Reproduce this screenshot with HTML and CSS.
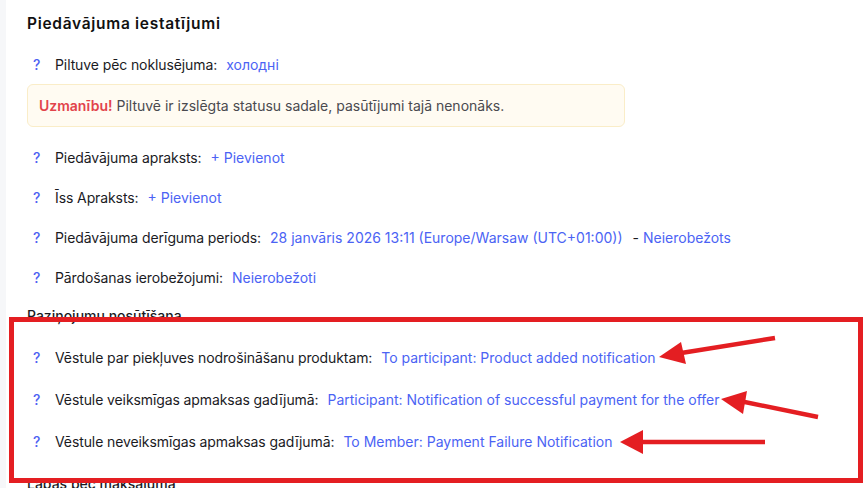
FILE: index.html
```html
<!DOCTYPE html>
<html lang="lv">
<head>
<meta charset="utf-8">
<link rel="stylesheet" href="styles.css">
</head>
<body>
<div class="card">
  <h2 class="title">Piedāvājuma iestatījumi</h2>
  <div class="row"><span class="help">?</span><span class="label">Piltuve pēc noklusējuma:</span><a class="link">холодні</a></div>
  <div class="alert"><b class="warn">Uzmanību!</b> Piltuvē ir izslēgta statusu sadale, pasūtījumi tajā nenonāks.</div>
  <div class="row"><span class="help">?</span><span class="label">Piedāvājuma apraksts:</span><a class="link">+ Pievienot</a></div>
  <div class="row"><span class="help">?</span><span class="label">Īss Apraksts:</span><a class="link">+ Pievienot</a></div>
  <div class="row"><span class="help">?</span><span class="label">Piedāvājuma derīguma periods:</span><a class="link">28 janvāris 2026 13:11 (Europe/Warsaw (UTC+01:00))</a><span class="dash">-</span><a class="link tight">Neierobežots</a></div>
  <div class="row"><span class="help">?</span><span class="label">Pārdošanas ierobežojumi:</span><a class="link">Neierobežoti</a></div>
  <div class="section">Paziņojumu nosūtīšana</div>
  <div class="row tall"><span class="help">?</span><span class="label">Vēstule par piekļuves nodrošināšanu produktam:</span><a class="link">To participant: Product added notification</a></div>
  <div class="row tall"><span class="help">?</span><span class="label">Vēstule veiksmīgas apmaksas gadījumā:</span><a class="link">Participant: Notification of successful payment for the offer</a></div>
  <div class="row tall"><span class="help">?</span><span class="label">Vēstule neveiksmīgas apmaksas gadījumā:</span><a class="link">To Member: Payment Failure Notification</a></div>
  <div class="section last">Lapas pēc maksājuma</div>
</div>
<svg class="annot" width="864" height="488" viewBox="0 0 864 488">
  <rect x="11.5" y="319.5" width="849" height="161" fill="none" stroke="#e41e22" stroke-width="5"/>
  <g stroke="#e41e22" stroke-width="4.5" fill="#e41e22" stroke-linecap="butt">
    <line x1="775" y1="338" x2="675" y2="354"/>
    <polygon points="659,357 681,342 686,364" stroke="none"/>
    <line x1="818" y1="417" x2="735" y2="400"/>
    <polygon points="721,399 747,391 743,414" stroke="none"/>
    <line x1="765" y1="442" x2="638" y2="442"/>
    <polygon points="620,442 643,430 643,454" stroke="none"/>
  </g>
</svg>
</body>
</html>
```
FILE: styles.css
```css
html, body {
  margin: 0;
  padding: 0;
  background: #f6f7f9;
  height: 488px;
  overflow: hidden;
}
body {
  font-family: Inter, "Noto Sans", sans-serif;
  font-size: 14px;
  color: #1b1b1f;
}
.card {
  margin-left: 6px;
  background: #ffffff;
  height: 488px;
  padding: 14px 21px 0;
  box-sizing: border-box;
}
.title {
  margin: 0 0 10px;
  font-size: 15.5px;
  line-height: 20px;
  font-weight: 600;
  color: #111;
  letter-spacing: 0.7px;
}
.row {
  height: 40px;
  display: flex;
  align-items: center;
  padding-left: 6px;
  white-space: nowrap;
}
.row.tall {
  height: 42px;
}
.help {
  width: 22px;
  color: #4d62f2;
  font-weight: 500;
}
.label {
  color: #1b1b1f;
  letter-spacing: -0.1px;
}
.link {
  color: #4b63f4;
  margin-left: 9px;
  cursor: pointer;
}
.link.tight {
  margin-left: 4px;
}
.dash {
  margin-left: 10px;
  color: #1b1b1f;
}
.alert {
  width: 598px;
  height: 43px;
  box-sizing: border-box;
  border: 1px solid #faedc8;
  background: #fffbf2;
  border-radius: 6px;
  padding: 0 11px;
  display: flex;
  align-items: center;
  margin-bottom: 10px;
  color: #4a4a4f;
  white-space: nowrap;
}
.warn {
  color: #e2434b;
  font-weight: 600;
  margin-right: 4px;
}
.section {
  height: 20px;
  line-height: 20px;
  margin: 9px 0 10px;
  color: #1b1b1f;
  font-weight: 500;
}
.section.last {
  margin-top: 12px;
}
.annot {
  position: absolute;
  left: 0;
  top: 0;
  pointer-events: none;
}
```
